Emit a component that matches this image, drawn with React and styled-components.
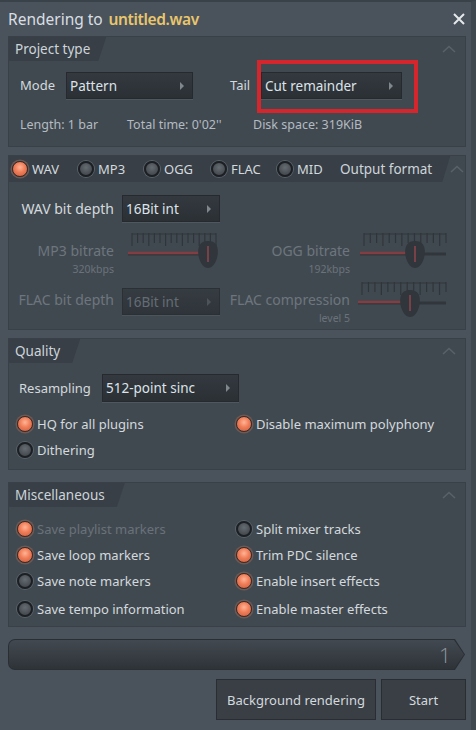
import React from "react";
import styled, { createGlobalStyle, css } from "styled-components";

const Global = createGlobalStyle`
  html, body { margin: 0; padding: 0; background: #4a535c; }
  body { font-family: "Noto Sans", "Open Sans", sans-serif; }
  * { box-sizing: border-box; }
`;

const Window = styled.div`
  width: 476px;
  height: 730px;
  background: #4a535c;
  border-top: 2px solid #3a4249;
  border-right: 5px solid #40484f;
  padding: 0 4px 0 8px;
  display: flex;
  flex-direction: column;
  overflow: hidden;
`;

const TitleBar = styled.div`
  height: 34px;
  display: flex;
  align-items: center;
  justify-content: space-between;
  padding-right: 1px;
`;

const Title = styled.div`
  font-size: 15.5px;
  color: #d9dee3;
`;

const FileName = styled.span`
  color: #e9c66c;
  font-weight: 600;
  letter-spacing: -0.35px;
  margin-left: 2px;
`;

const Close = styled.div`
  width: 14px;
  height: 14px;
  display: flex;
  align-items: center;
  justify-content: center;
`;

const Section = styled.section`
  background: #414950;
  border: 1px solid #394047;
  margin-top: ${(p) => p.$mt || 0}px;
  height: ${(p) => p.$h}px;
  display: flex;
  flex-direction: column;
  flex-shrink: 0;
  margin-right: 1px;
`;

const Header = styled.div`
  height: ${(p) => p.$h || 24}px;
  display: flex;
  align-items: stretch;
  justify-content: space-between;
  flex-shrink: 0;
`;

const Tab = styled.div`
  background: #383f46;
  color: #cdd4da;
  font-size: 13.5px;
  white-space: nowrap;
  display: flex;
  align-items: center;
  padding: 0 ${(p) => p.$pr ?? 16}px 0 ${(p) => p.$pl ?? 6}px;
  clip-path: polygon(0 0, 100% 0, calc(100% - 8px) 100%, 0 100%);
`;

const Caret = styled.div`
  width: 24px;
  display: flex;
  align-items: center;
  justify-content: center;
  margin-right: 4px;
`;

const Body = styled.div`
  padding: ${(p) => p.$pad || "0"};
  display: flex;
  flex-direction: column;
`;

const Row = styled.div`
  display: flex;
  align-items: center;
  gap: ${(p) => p.$gap ?? 6}px;
  margin-top: ${(p) => p.$mt ?? 0}px;
  margin-left: ${(p) => p.$ml ?? 0}px;
`;

const Label = styled.span`
  font-size: ${(p) => (p.$lg ? 14 : 13)}px;
  line-height: 19px;
  color: ${(p) => (p.$dim ? "#6d767e" : "#d3d9de")};
  white-space: nowrap;
  width: ${(p) => (p.$w ? `${p.$w}px` : "auto")};
`;

const Info = styled.span`
  font-size: 12.5px;
  color: #b3bbc2;
  white-space: nowrap;
  width: ${(p) => (p.$w ? `${p.$w}px` : "auto")};
`;

const Dropdown = styled.div`
  width: ${(p) => p.$w}px;
  height: ${(p) => p.$h || 27}px;
  background: linear-gradient(#33393f, #2b3035);
  border: 1px solid #262a2e;
  box-shadow: 0 1px 0 #4f585f;
  display: flex;
  align-items: center;
  justify-content: space-between;
  padding: 0 8px 0 3px;
  font-size: 13.5px;
  color: ${(p) => (p.$dim ? "#6d767e" : "#dde3e8")};
  opacity: ${(p) => (p.$dim ? 0.8 : 1)};
  white-space: nowrap;
`;

const Arrow = styled.span`
  width: 0;
  height: 0;
  border-top: 4px solid transparent;
  border-bottom: 4px solid transparent;
  border-left: 4px solid ${(p) => (p.$dim ? "#4f565c" : "#80878d")};
`;

const Highlight = styled.div`
  position: relative;
  &::after {
    content: "";
    position: absolute;
    inset: -12px -16px -14px -4px;
    border: 4px solid #d5262d;
    pointer-events: none;
  }
`;

const RadioDot = styled.span`
  width: 16px;
  height: 16px;
  border-radius: 50%;
  flex-shrink: 0;
  ${(p) =>
    p.$on
      ? css`
          background: radial-gradient(circle at 50% 38%, #ffb495 0, #f07d58 45%, #c95a3b 100%);
          border: 1.5px solid #3b2b27;
          box-shadow: 0 0 0 1.5px #6e5a54;
        `
      : css`
          background: radial-gradient(circle at 50% 38%, #656c72 0, #4a5056 60%, #3f444a 100%);
          border: 2px solid #1c2024;
          box-shadow: 0 0 0 1px #59626a;
        `}
`;

const RadioWrap = styled.label`
  display: flex;
  align-items: center;
  gap: 4px;
  font-size: 13px;
  color: ${(p) => (p.$dim ? "#69727a" : "#d3d9de")};
  white-space: nowrap;
  height: ${(p) => p.$h || 26}px;
`;

const RadioText = styled.span`
  width: ${(p) => (p.$w ? `${p.$w}px` : "auto")};
`;

const Radio = ({ on, dim, h, w, children }) => (
  <RadioWrap $dim={dim} $h={h}>
    <RadioDot $on={on} />
    <RadioText $w={w}>{children}</RadioText>
  </RadioWrap>
);

const FormatGrid = styled.div`
  display: grid;
  grid-template-columns: 98px 100px 120px 92px;
  column-gap: 8px;
  padding-left: 7px;
  align-items: start;
`;

const Cell = styled.div`
  display: flex;
  flex-direction: column;
  align-items: ${(p) => (p.$right ? "flex-end" : "flex-start")};
  margin-top: ${(p) => p.$mt || 0}px;
  padding-left: ${(p) => p.$pl || 0}px;
`;

const Sub = styled.span`
  font-size: 10.5px;
  line-height: 14px;
  color: #6a737b;
  margin-top: 2px;
`;

const TwoCol = styled.div`
  display: grid;
  grid-template-columns: 219px 1fr;
  padding-left: 8px;
  margin-top: ${(p) => p.$mt || 0}px;
`;

const ProgressFrame = styled.div`
  margin-top: 12px;
  margin-right: 2px;
  height: 31px;
  padding: 1px 1px 1px 1px;
  background: #2a2f34;
  border-radius: 7px 0 0 7px;
  clip-path: polygon(0 0, calc(100% - 10px) 0, 100% 50%, calc(100% - 10px) 100%, 0 100%);
  flex-shrink: 0;
  display: flex;
`;

const Progress = styled.div`
  flex: 1;
  background: linear-gradient(#424950, #2e3338);
  border-radius: 6px 0 0 6px;
  clip-path: polygon(0 0, calc(100% - 10px) 0, 100% 50%, calc(100% - 10px) 100%, 0 100%);
  display: flex;
  align-items: center;
  justify-content: flex-end;
  padding-right: 13px;
  font-size: 21px;
  color: #8f979e;
  font-family: "Open Sans", "Noto Sans", sans-serif;
  font-weight: 300;
`;

const Buttons = styled.div`
  margin-top: 9px;
  display: flex;
  justify-content: flex-end;
  gap: 5px;
  margin-right: 1px;
`;

const Button = styled.button`
  height: 41px;
  width: ${(p) => p.$w}px;
  background: #393f45;
  border: 1px solid #2a2e33;
  color: #d4d9de;
  font-family: inherit;
  font-size: 13px;
  padding: 0;
`;

const Slider = ({ pos, end, ticks }) => {
  const w = 92;
  return (
    <svg width={w} height="40" viewBox={`0 0 ${w} 40`} style={{ display: "block", opacity: 0.75 }}>
      <line x1="4" y1="4" x2={end} y2="4" stroke="#2c3237" strokeWidth="1" />
      {Array.from({ length: ticks }).map((_, i) => {
        const x = 4 + (i * (end - 4)) / (ticks - 1);
        const long = i % 3 === 0;
        return <line key={i} x1={x} y1="3" x2={x} y2={long ? 16 : 13} stroke="#2a3035" strokeWidth="1.2" />;
      })}
      <line x1="0" y1="24" x2={end} y2="24" stroke="#2b3035" strokeWidth="3" />
      <line x1="0" y1="23" x2={pos - 6} y2="23" stroke="#9b3a3e" strokeWidth="2.5" />
      <path
        d={`M ${pos} 11 C ${pos + 10} 11 ${pos + 11} 20 ${pos + 9} 28 C ${pos + 7} 35 ${pos + 3} 38 ${pos} 38 C ${pos - 3} 38 ${pos - 7} 35 ${pos - 9} 28 C ${pos - 11} 20 ${pos - 10} 11 ${pos} 11 Z`}
        fill="#2b3035"
      />
      <line x1={pos} y1="16" x2={pos} y2="32" stroke="#a8464a" strokeWidth="1.5" />
    </svg>
  );
};

const CaretIcon = () => (
  <svg width="14" height="8" viewBox="0 0 14 8">
    <path d="M1 7 L7 1.5 L13 7" fill="none" stroke="#59626a" strokeWidth="1.5" />
  </svg>
);

export default function App() {
  return (
    <>
      <Global />
      <Window>
        <TitleBar>
          <Title>
            Rendering to<FileName> untitled.wav</FileName>
          </Title>
          <Close>
            <svg width="12" height="12" viewBox="0 0 12 12">
              <path d="M1 1 L11 11 M11 1 L1 11" stroke="#e4e8eb" strokeWidth="2" />
            </svg>
          </Close>
        </TitleBar>

        <Section $h={111}>
          <Header>
            <Tab>Project type</Tab>
            <Caret><CaretIcon /></Caret>
          </Header>
          <Body $pad="11px 0 0 11px">
            <Row $gap={0}>
              <Label $w={46}>Mode</Label>
              <Dropdown $w={127}>
                Pattern <Arrow />
              </Dropdown>
              <Row $gap={0} $ml={37}>
                <Label $w={31}>Tail</Label>
                <Highlight>
                  <Dropdown $w={141}>
                    Cut remainder <Arrow />
                  </Dropdown>
                </Highlight>
              </Row>
            </Row>
            <Row $mt={17} $gap={0}>
              <Info $w={107}>Length: 1 bar</Info>
              <Info $w={126}>Total time: 0'02''</Info>
              <Info>Disk space: 319KiB</Info>
            </Row>
          </Body>
        </Section>

        <Section $mt={8} $h={175}>
          <Header $h={26}>
            <Tab $pl={3} $pr={18}>
              <Row $gap={0}>
                <Radio on h={24} w={46}>WAV</Radio>
                <Radio h={24} w={46}>MP3</Radio>
                <Radio h={24} w={47}>OGG</Radio>
                <Radio h={24} w={46}>FLAC</Radio>
                <Radio h={24} w={43}>MID</Radio>
                <span>Output format</span>
              </Row>
            </Tab>
            <Caret><CaretIcon /></Caret>
          </Header>
          <Body $pad="13px 0 0 0">
            <FormatGrid>
              <Cell $right $mt={4}><Label $lg>WAV bit depth</Label></Cell>
              <Cell><Dropdown $w={98}>16Bit int <Arrow /></Dropdown></Cell>
              <div />
              <div />

              <Cell $right $mt={19}>
                <Label $lg $dim>MP3 bitrate</Label>
                <Sub>320kbps</Sub>
              </Cell>
              <Cell $mt={8} $pl={6}>
                <Slider pos={80} end={88} ticks={16} />
              </Cell>
              <Cell $right $mt={19}>
                <Label $lg $dim>OGG bitrate</Label>
                <Sub>192kbps</Sub>
              </Cell>
              <Cell $mt={8} $pl={2}>
                <Slider pos={55} end={86} ticks={14} />
              </Cell>

              <Cell $right $mt={14}>
                <Label $lg $dim>FLAC bit depth</Label>
              </Cell>
              <Cell $mt={12}>
                <Dropdown $w={98} $dim>16Bit int <Arrow $dim /></Dropdown>
              </Cell>
              <Cell $right $mt={14}>
                <Label $lg $dim>FLAC compression</Label>
                <Sub>level 5</Sub>
              </Cell>
              <Cell $mt={3}>
                <Slider pos={52} end={88} ticks={14} />
              </Cell>
            </FormatGrid>
          </Body>
        </Section>

        <Section $mt={8} $h={132}>
          <Header>
            <Tab $pr={20}>Quality</Tab>
            <Caret><CaretIcon /></Caret>
          </Header>
          <Body $pad="11px 0 0 10px">
            <Row $gap={0}>
              <Label $w={83}>Resampling</Label>
              <Dropdown $w={137} $h={28}>512-point sinc <Arrow /></Dropdown>
            </Row>
          </Body>
          <TwoCol $mt={9}>
            <Radio on>HQ for all plugins</Radio>
            <Radio on>Disable maximum polyphony</Radio>
            <Radio>Dithering</Radio>
          </TwoCol>
        </Section>

        <Section $mt={12} $h={145}>
          <Header>
            <Tab $pr={20}>Miscellaneous</Tab>
            <Caret><CaretIcon /></Caret>
          </Header>
          <TwoCol $mt={9}>
            <Radio on dim>Save playlist markers</Radio>
            <Radio>Split mixer tracks</Radio>
            <Radio on>Save loop markers</Radio>
            <Radio on>Trim PDC silence</Radio>
            <Radio>Save note markers</Radio>
            <Radio on>Enable insert effects</Radio>
            <Radio h={30}>Save tempo information</Radio>
            <Radio on h={30}>Enable master effects</Radio>
          </TwoCol>
        </Section>

        <ProgressFrame>
          <Progress>1</Progress>
        </ProgressFrame>

        <Buttons>
          <Button $w={160}>Background rendering</Button>
          <Button $w={85}>Start</Button>
        </Buttons>
      </Window>
    </>
  );
}
